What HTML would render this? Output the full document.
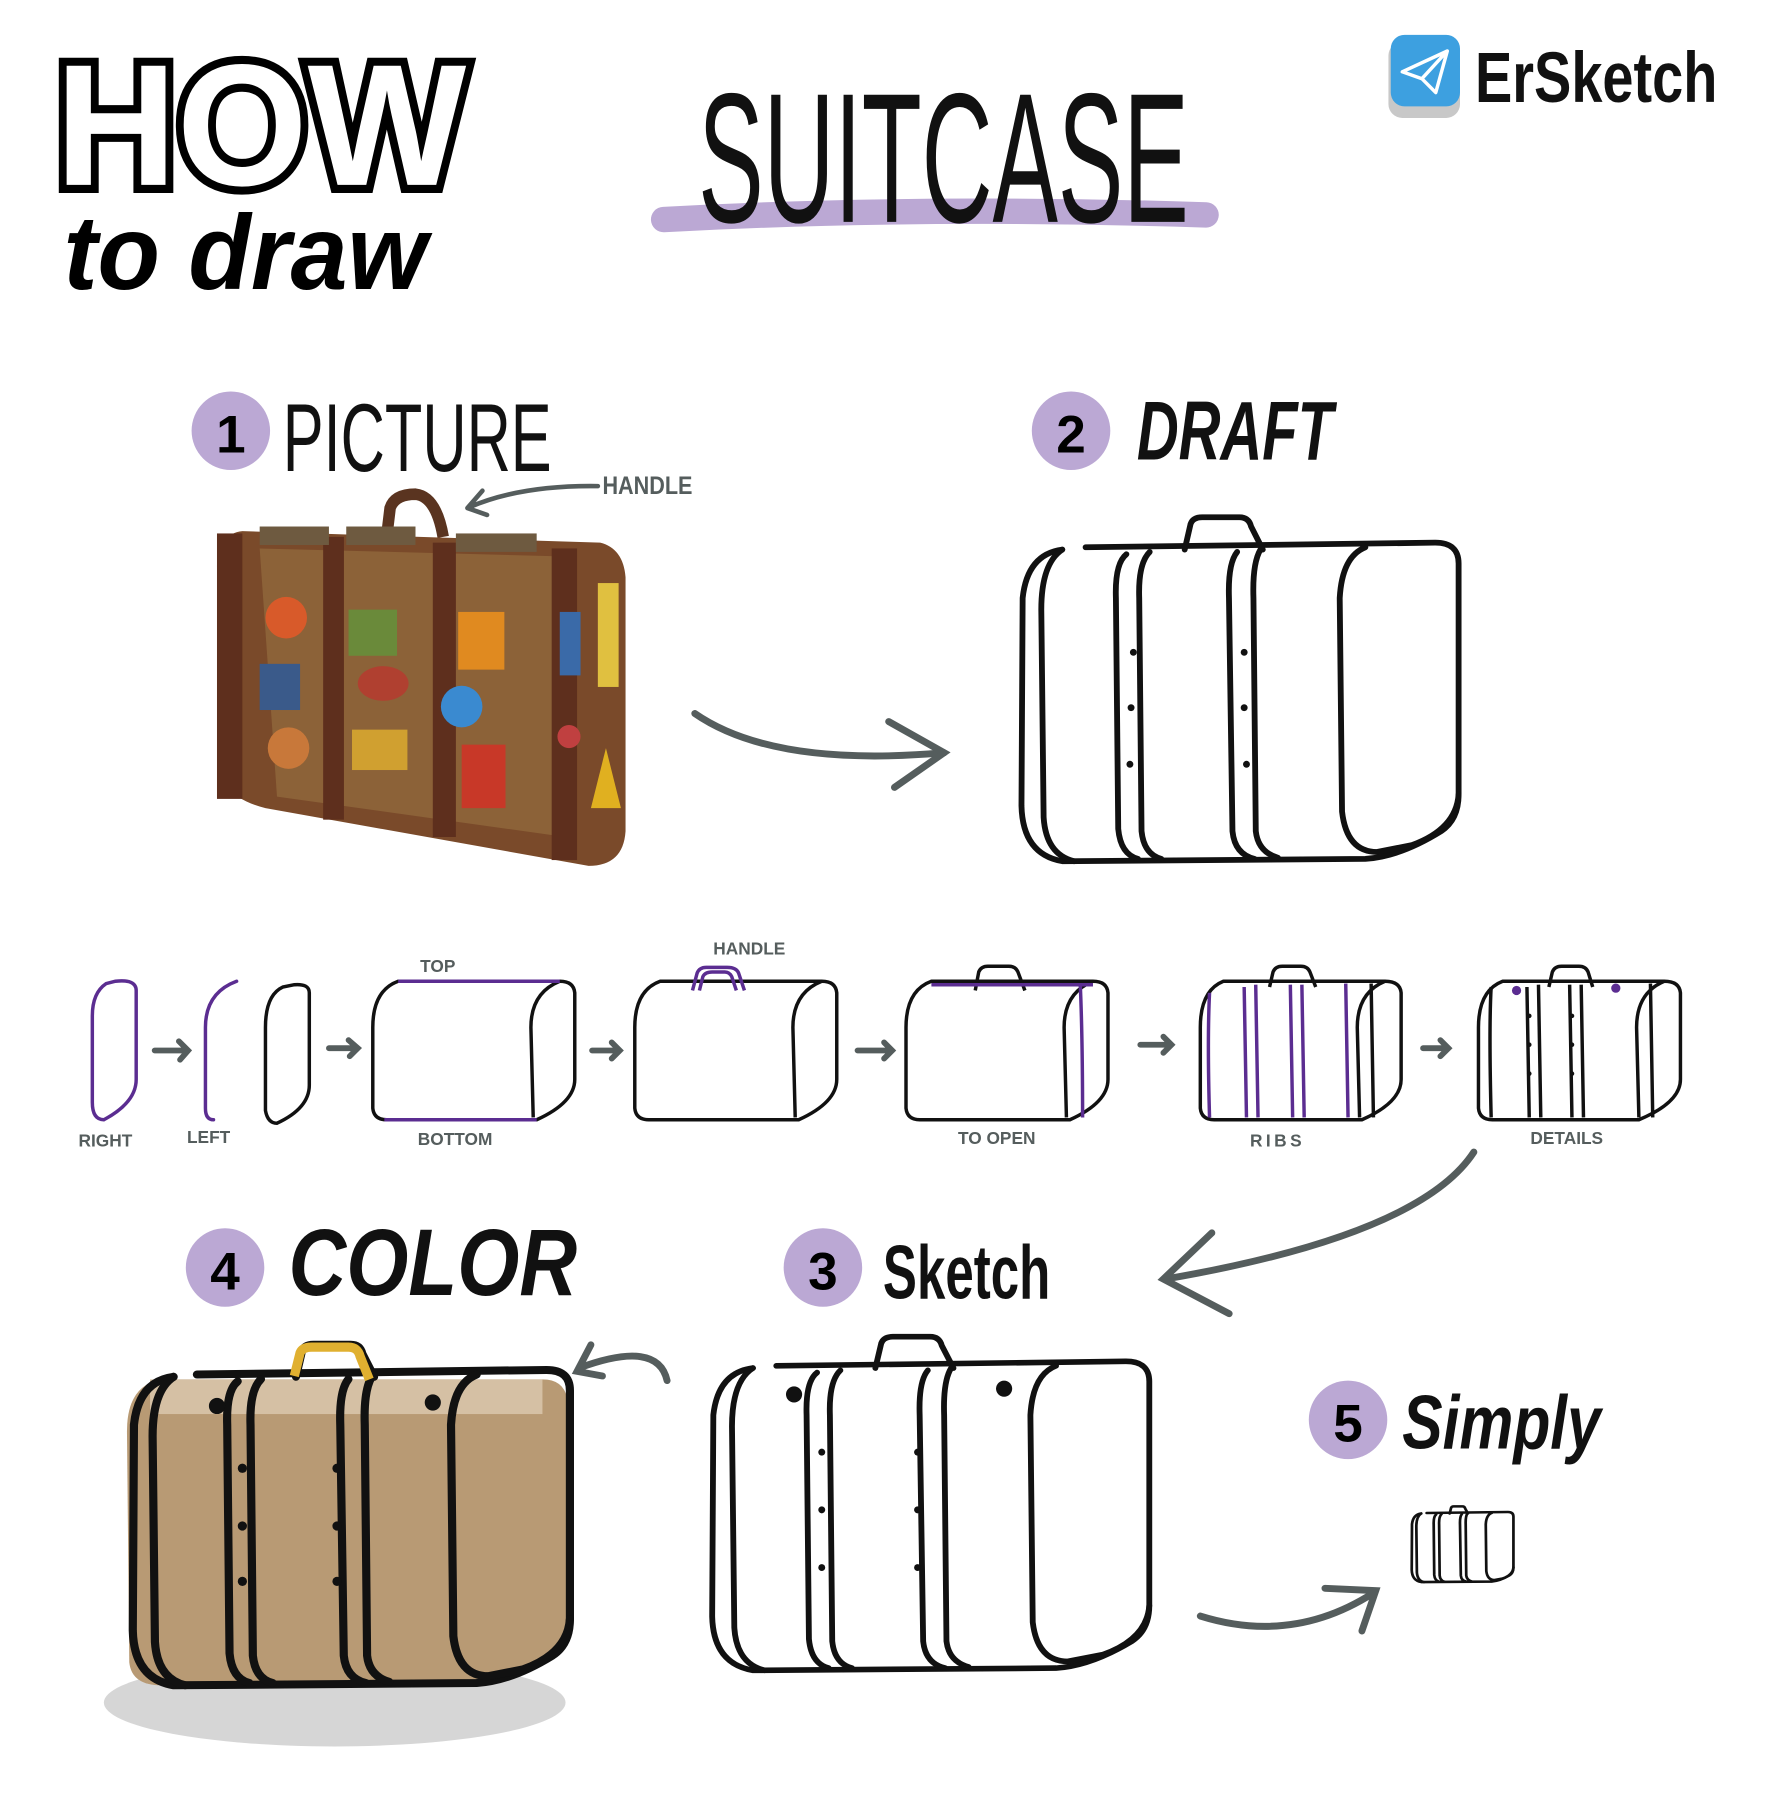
<!DOCTYPE html>
<html><head><meta charset="utf-8"><style>
html,body{margin:0;padding:0;background:#fff;}
svg{display:block}
text{font-family:"Liberation Sans",sans-serif;}
</style></head><body>
<svg width="1767" height="1809" viewBox="0 0 1531 1567" xmlns="http://www.w3.org/2000/svg">
<defs>
<g id="sc" fill="none" stroke="#111" stroke-linecap="round" stroke-linejoin="round">
  <path d="M40,28 Q10,32 6,70 L5,250 Q6,292 40,298 L300,296 Q330,294 365,272 Q380,262 380,240 L380,40 Q380,22 360,22 L60,26" />
  <path d="M40,28 Q22,40 22,80 L24,260 Q26,292 50,298" />
  <path d="M95,32 Q85,40 86,70 L88,270 Q90,292 105,296" />
  <path d="M115,30 Q105,40 106,70 L108,272 Q110,292 125,296" />
  <path d="M190,30 Q182,40 183,70 L186,272 Q188,292 205,296" />
  <path d="M210,28 Q203,40 204,70 L206,272 Q208,290 225,295" />
  <path d="M300,26 Q280,34 278,70 L280,255 Q284,290 310,290 L340,284 Q378,270 380,240" />
  <path d="M145,28 L150,6 Q152,0 160,0 L192,0 Q200,0 202,8 L212,28" />
</g>
</defs>

<!-- HOW -->
<text x="48" y="160" font-size="150" font-weight="bold" fill="#fff" stroke="#000" stroke-width="14" paint-order="stroke" textLength="356" lengthAdjust="spacingAndGlyphs">HOW</text>
<text x="55" y="250" font-size="92" font-weight="bold" font-style="italic" fill="#000" textLength="315" lengthAdjust="spacingAndGlyphs">to draw</text>

<!-- SUITCASE -->
<path d="M575,190 Q800,178 1045,186" stroke="#bba8d4" stroke-width="22" stroke-linecap="round" fill="none"/>
<text x="605" y="192" font-size="160" fill="#111" textLength="425" lengthAdjust="spacingAndGlyphs">SUITCASE</text>

<!-- logo -->
<rect x="1203" y="36" width="62" height="66" rx="12" fill="#c8c8c8"/>
<rect x="1205" y="30" width="60" height="62" rx="12" fill="#3da0e0"/>
<path d="M1215,62 L1254,44 L1244,80 L1232,68 Z M1232,68 L1254,44" fill="none" stroke="#fff" stroke-width="3" stroke-linejoin="round"/>
<text x="1278" y="88" font-size="62" font-weight="bold" fill="#111" textLength="210" lengthAdjust="spacingAndGlyphs">ErSketch</text>

<!-- headers -->
<circle cx="200" cy="373" r="34" fill="#bba8d4"/>
<text x="200" y="392" font-size="46" font-weight="bold" text-anchor="middle">1</text>
<text x="245" y="408" font-size="84" fill="#111" textLength="233" lengthAdjust="spacingAndGlyphs">PICTURE</text>
<circle cx="928" cy="373" r="34" fill="#bba8d4"/>
<text x="928" y="392" font-size="46" font-weight="bold" text-anchor="middle">2</text>
<text x="985" y="398" font-size="72" font-weight="bold" font-style="italic" fill="#111" textLength="170" lengthAdjust="spacingAndGlyphs">DRAFT</text>
<circle cx="195" cy="1098" r="34" fill="#bba8d4"/>
<text x="195" y="1117" font-size="46" font-weight="bold" text-anchor="middle">4</text>
<text x="250" y="1122" font-size="82" font-weight="bold" font-style="italic" fill="#111" textLength="250" lengthAdjust="spacingAndGlyphs">COLOR</text>
<circle cx="713" cy="1098" r="34" fill="#bba8d4"/>
<text x="713" y="1117" font-size="46" font-weight="bold" text-anchor="middle">3</text>
<text x="765" y="1125" font-size="66" font-weight="bold" fill="#111" textLength="145" lengthAdjust="spacingAndGlyphs">Sketch</text>
<circle cx="1168" cy="1230" r="34" fill="#bba8d4"/>
<text x="1168" y="1249" font-size="46" font-weight="bold" text-anchor="middle">5</text>
<text x="1215" y="1255" font-size="66" font-weight="bold" font-style="italic" fill="#111" textLength="172" lengthAdjust="spacingAndGlyphs">Simply</text>

<!-- photo suitcase -->
<path d="M335,465 L338,440 Q342,428 360,428 Q378,430 384,465" fill="none" stroke="#5a3420" stroke-width="10"/>
<path d="M210,460 L520,470 Q540,475 542,500 L542,720 Q540,750 510,750 L230,700 Q190,690 190,660 L188,490 Q190,462 210,460 Z" fill="#7a4a2a"/>
<path d="M225,475 L490,482 L490,725 L240,690 Z" fill="#8c6238"/>
<rect x="188" y="462" width="22" height="230" fill="#5e2f1d"/>
<rect x="280" y="465" width="18" height="245" fill="#5e2f1d"/>
<rect x="375" y="470" width="20" height="255" fill="#5e2f1d"/>
<rect x="478" y="475" width="22" height="270" fill="#5e2f1d"/>
<rect x="225" y="456" width="60" height="16" fill="#6e5a40"/>
<rect x="300" y="456" width="60" height="16" fill="#6e5a40"/>
<rect x="395" y="462" width="70" height="16" fill="#6e5a40"/>
<circle cx="248" cy="535" r="18" fill="#d85a2a"/>
<rect x="225" y="575" width="35" height="40" fill="#3a5a8a"/>
<circle cx="250" cy="648" r="18" fill="#c8783a"/>
<rect x="302" y="528" width="42" height="40" fill="#6a8a3a"/>
<ellipse cx="332" cy="592" rx="22" ry="15" fill="#b04030"/>
<rect x="305" y="632" width="48" height="35" fill="#d0a030"/>
<rect x="397" y="530" width="40" height="50" fill="#e08a20"/>
<circle cx="400" cy="612" r="18" fill="#3a8ad0"/>
<rect x="400" y="645" width="38" height="55" fill="#c83828"/>
<rect x="485" y="530" width="18" height="55" fill="#3a6aa8"/>
<rect x="518" y="505" width="18" height="90" fill="#e0c040"/>
<circle cx="493" cy="638" r="10" fill="#c04040"/>
<path d="M512,700 L525,648 L538,700 Z" fill="#e0b020"/>

<!-- handle label -->
<path d="M518,421 Q450,420 405,440 M405,440 L418,425 M405,440 L422,446" fill="none" stroke="#555d5d" stroke-width="4" stroke-linecap="round"/>
<text x="522" y="428" font-size="22" fill="#555d5d" font-weight="bold" textLength="78" lengthAdjust="spacingAndGlyphs">HANDLE</text>

<!-- arrows -->
<g fill="none" stroke="#555d5d" stroke-linecap="round" stroke-width="6">
<path d="M602,618 Q670,665 818,652"/><path d="M770,625 L818,652 L775,682"/>
<path d="M1277,998 Q1230,1070 1010,1108"/><path d="M1050,1068 L1008,1108 L1065,1138"/>
<path d="M578,1196 Q570,1160 502,1185"/><path d="M512,1165 L500,1188 L522,1192"/>
<path d="M1040,1400 Q1120,1425 1190,1380"/><path d="M1148,1376 L1192,1378 L1180,1413"/>
</g>

<!-- draft & sketch -->
<use href="#sc" transform="translate(880,448) scale(1.01,1)" stroke-width="5"/>
<use href="#sc" transform="translate(612,1158) scale(1.01,0.97)" stroke-width="5"/>
<g fill="#111"><circle cx="982" cy="565" r="3"/><circle cx="980" cy="613" r="3"/><circle cx="979" cy="662" r="3"/><circle cx="1078" cy="565" r="3"/><circle cx="1078" cy="613" r="3"/><circle cx="1080" cy="662" r="3"/>
<circle cx="712" cy="1258" r="3"/><circle cx="712" cy="1308" r="3"/><circle cx="712" cy="1358" r="3"/><circle cx="795" cy="1258" r="3"/><circle cx="795" cy="1308" r="3"/><circle cx="795" cy="1358" r="3"/>
<circle cx="688" cy="1208" r="7"/><circle cx="870" cy="1203" r="7"/></g>

<!-- color -->
<ellipse cx="290" cy="1475" rx="200" ry="38" fill="#d6d6d6"/>
<path d="M140,1195 Q110,1200 110,1240 L112,1440 Q114,1460 140,1460 L410,1458 Q440,1455 475,1432 Q492,1420 492,1400 L492,1215 Q490,1195 470,1195 Z" fill="#b89a74"/>
<rect x="130" y="1195" width="340" height="30" fill="#d5c0a4"/>
<use href="#sc" transform="translate(110,1165) scale(1.01,0.99)" stroke-width="7"/>
<path d="M255,1192 L260,1172 Q262,1167 270,1167 L302,1167 Q310,1167 312,1175 L320,1195" fill="none" stroke="#e0b030" stroke-width="8"/>
<g fill="#111"><circle cx="210" cy="1272" r="4"/><circle cx="210" cy="1322" r="4"/><circle cx="210" cy="1370" r="4"/><circle cx="292" cy="1272" r="4"/><circle cx="292" cy="1322" r="4"/><circle cx="292" cy="1370" r="4"/><circle cx="188" cy="1218" r="7"/><circle cx="375" cy="1215" r="7"/></g>

<!-- small -->
<use href="#sc" transform="translate(1222,1305) scale(0.235,0.22)" stroke-width="10"/>

<!-- steps row -->
<g fill="none" stroke-width="3" stroke-linecap="round">
<path d="M92,852 Q80,860 80,880 L80,955 Q80,970 90,970 Q118,955 118,935 L118,858 Q118,848 100,850 Z" stroke="#5b2d91"/>
<path d="M205,850 Q178,860 178,890 L178,960 Q178,970 185,970" stroke="#5b2d91"/>
<path d="M245,855 Q230,862 230,890 L230,962 Q232,973 240,973 Q268,960 268,940 L268,860 Q268,852 255,853 Z" stroke="#111"/>
<g stroke="#555d5d" stroke-width="5"><path d="M134,910 L163,910 M155,902 L163,910 L156,918"/><path d="M285,908 L310,908 M302,901 L310,908 L303,915"/><path d="M513,910 L537,910 M530,903 L537,910 L530,917"/><path d="M743,910 L773,910 M766,903 L773,910 L766,917"/><path d="M988,905 L1015,905 M1008,898 L1015,905 L1008,912"/><path d="M1233,908 L1255,908 M1248,901 L1255,908 L1248,915"/></g>
</g>
<g font-size="15" fill="#555d5d" font-weight="bold">
<text x="68" y="993">RIGHT</text><text x="162" y="990">LEFT</text><text x="364" y="842">TOP</text><text x="362" y="992">BOTTOM</text><text x="618" y="827">HANDLE</text><text x="830" y="991">TO OPEN</text><text x="1083" y="993" letter-spacing="3">RIBS</text><text x="1326" y="991">DETAILS</text>
</g>
<g fill="none" stroke="#111" stroke-width="3" stroke-linejoin="round">
<path d="M345,850 Q323,858 323,890 L323,960 Q324,970 335,970 L465,970 Q498,955 498,935 L498,860 Q497,850 485,850 Z"/>
<path d="M485,850 Q460,860 460,890 L462,968"/>
<path d="M572,850 Q550,858 550,890 L550,960 Q551,970 562,970 L692,970 Q725,955 725,935 L725,860 Q724,850 712,850 Z"/>
<path d="M712,850 Q687,860 687,890 L689,968"/>
<path d="M807,850 Q785,858 785,890 L785,960 Q786,970 797,970 L927,970 Q960,955 960,935 L960,860 Q959,850 947,850 Z"/>
<path d="M947,850 Q922,860 922,890 L924,968"/>
<path d="M845,858 L848,842 Q850,837 856,837 L874,837 Q880,837 882,842 L888,858"/>
<path d="M1060,850 Q1040,858 1040,890 L1040,960 Q1041,970 1052,970 L1180,970 Q1214,955 1214,935 L1214,860 Q1213,850 1200,850 Z"/>
<path d="M1200,850 Q1176,860 1176,890 L1178,968 M1188,852 L1190,968"/>
<path d="M1100,855 L1103,842 Q1105,837 1111,837 L1127,837 Q1133,837 1135,842 L1140,855"/>
<path d="M1302,850 Q1281,858 1281,890 L1281,960 Q1282,970 1293,970 L1420,970 Q1456,955 1456,935 L1456,860 Q1455,850 1442,850 Z"/>
<path d="M1442,850 Q1418,860 1418,890 L1420,968 M1430,852 L1432,968 M1292,855 Q1290,890 1292,968 M1323,855 L1325,968 M1333,853 L1335,968 M1360,853 L1362,968 M1370,853 L1372,968"/>
<path d="M1342,855 L1345,842 Q1347,837 1353,837 L1368,837 Q1374,837 1376,842 L1380,855"/>
</g>
<g fill="none" stroke="#5b2d91" stroke-width="3">
<path d="M345,850 L485,850 M333,970 L465,970"/>
<path d="M600,858 L604,843 Q606,838 612,838 L630,838 Q638,838 640,843 L645,858 M606,858 L609,846 Q611,842 617,842 L628,842 Q632,842 634,846 L638,858"/>
<path d="M807,853 L947,853 M936,853 Q938,900 938,968"/>
<path d="M1048,860 Q1046,900 1048,968 M1078,855 L1080,968 M1088,853 L1090,968 M1118,853 L1120,968 M1128,853 L1130,968 M1166,852 L1168,968"/>
</g>
<g fill="#5b2d91"><circle cx="1314" cy="858" r="4"/><circle cx="1400" cy="856" r="4"/></g>
<g fill="#111"><circle cx="1325" cy="880" r="2"/><circle cx="1325" cy="905" r="2"/><circle cx="1325" cy="930" r="2"/><circle cx="1362" cy="880" r="2"/><circle cx="1362" cy="905" r="2"/><circle cx="1362" cy="930" r="2"/></g>
</svg>
</body></html>
